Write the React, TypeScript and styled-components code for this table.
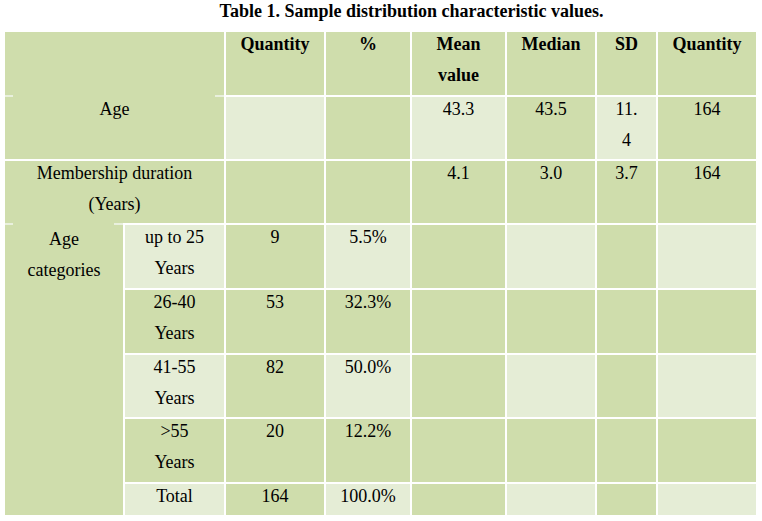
import * as React from 'react';
import styled, { createGlobalStyle } from 'styled-components';

const DARK = '#cfddac';
const LIGHT = '#e5edd6';
const STUB = '#e9f0dd';

const GlobalStyle = createGlobalStyle`
  html, body {
    margin: 0;
    padding: 0;
    background: #ffffff;
  }
  body {
    font-family: "Liberation Serif", "Times New Roman", serif;
    color: #000;
  }
`;

const Page = styled.div`
  width: 762px;
  padding: 0 6px 0 5px;
  box-sizing: border-box;
`;

const Caption = styled.h1`
  margin: 0 0 10px;
  padding: 1px 0 0 62px;
  font-size: 18px;
  font-weight: bold;
  line-height: 21px;
  text-align: center;
`;

const Grid = styled.div`
  display: grid;
  grid-template-columns: 118px 99px 98px 84px 93px 88px 59px 98px;
  grid-template-rows: 63px 62px 62px 63px 63px 62px 63px 31px;
  gap: 2px;
  background: #ffffff;
  width: 751px;
`;

type Shade = 'dark' | 'light';

const Cell = styled.div<{ $shade?: Shade; $bold?: boolean; $span?: number }>`
  background: ${({ $shade }) => ($shade === 'light' ? LIGHT : DARK)};
  grid-column: span ${({ $span }) => $span || 1};
  font-size: 18px;
  font-weight: ${({ $bold }) => ($bold ? 'bold' : 'normal')};
  line-height: 31.5px;
  text-align: center;
  overflow: visible;
`;

const Text = styled.div`
  margin-top: -3.5px;
`;

const MergedHead = styled.div`
  grid-column: 1 / 3;
  grid-row: 1 / 3;
  display: flex;
  flex-direction: column;
  background: ${DARK};
  font-size: 18px;
  line-height: 31.5px;
  text-align: center;
`;

const HeadBlank = styled.div`
  height: 63px;
`;

const StubLine = styled.div`
  height: 2px;
  background: linear-gradient(
    to right,
    ${STUB} 0,
    ${STUB} 8px,
    transparent 8px,
    transparent calc(100% - 9px),
    ${STUB} calc(100% - 9px)
  );
`;

const Group = styled.div`
  grid-column: 1;
  grid-row: 4 / 9;
  margin-top: -2px;
  background: ${DARK};
  font-size: 18px;
  line-height: 31.5px;
  text-align: center;
  display: flex;
  flex-direction: column;
`;

const GroupText = styled.div`
  padding-top: 2px;
  margin-top: -3.5px;
`;

const Lines = ({ lines }: { lines: string[] }) => (
  <Text>
    {lines.map((l, i) => (
      <React.Fragment key={i}>
        {i > 0 && <br />}
        {l}
      </React.Fragment>
    ))}
  </Text>
);

type Row = { label: string[]; cells: (string[] | null)[]; shades: Shade[] };

const headers = [['Quantity'], ['%'], ['Mean', 'value'], ['Median'], ['SD'], ['Quantity']];

const striped: Shade[] = ['light', 'dark', 'light', 'dark', 'light', 'dark', 'light'];
const plain: Shade[] = ['dark', 'dark', 'dark', 'dark', 'dark', 'dark', 'dark'];

const categories: Row[] = [
  { label: ['up to 25', 'Years'], cells: [['9'], ['5.5%'], null, null, null, null], shades: striped },
  { label: ['26-40', 'Years'], cells: [['53'], ['32.3%'], null, null, null, null], shades: plain },
  { label: ['41-55', 'Years'], cells: [['82'], ['50.0%'], null, null, null, null], shades: striped },
  { label: ['>55', 'Years'], cells: [['20'], ['12.2%'], null, null, null, null], shades: plain },
  { label: ['Total'], cells: [['164'], ['100.0%'], null, null, null, null], shades: striped },
];

export default function App() {
  return (
    <Page>
      <GlobalStyle />
      <Caption>Table 1. Sample distribution characteristic values.</Caption>
      <Grid>
        <MergedHead>
          <HeadBlank />
          <StubLine />
          <Text>Age</Text>
        </MergedHead>
        {headers.map((h, i) => (
          <Cell key={'h' + i} $bold>
            <Lines lines={h} />
          </Cell>
        ))}

        <Cell $shade="light" />
        <Cell />
        <Cell $shade="light"><Lines lines={['43.3']} /></Cell>
        <Cell><Lines lines={['43.5']} /></Cell>
        <Cell $shade="light"><Lines lines={['11.', '4']} /></Cell>
        <Cell><Lines lines={['164']} /></Cell>

        <Cell $span={2}><Lines lines={['Membership duration', '(Years)']} /></Cell>
        <Cell />
        <Cell />
        <Cell><Lines lines={['4.1']} /></Cell>
        <Cell><Lines lines={['3.0']} /></Cell>
        <Cell><Lines lines={['3.7']} /></Cell>
        <Cell><Lines lines={['164']} /></Cell>

        <Group>
          <StubLine />
          <GroupText>Age<br />categories</GroupText>
        </Group>
        {categories.map((row, r) => (
          <React.Fragment key={'r' + r}>
            <Cell $shade={row.shades[0]}><Lines lines={row.label} /></Cell>
            {row.cells.map((c, i) => (
              <Cell key={i} $shade={row.shades[i + 1]}>
                {c && <Lines lines={c} />}
              </Cell>
            ))}
          </React.Fragment>
        ))}
      </Grid>
    </Page>
  );
}
